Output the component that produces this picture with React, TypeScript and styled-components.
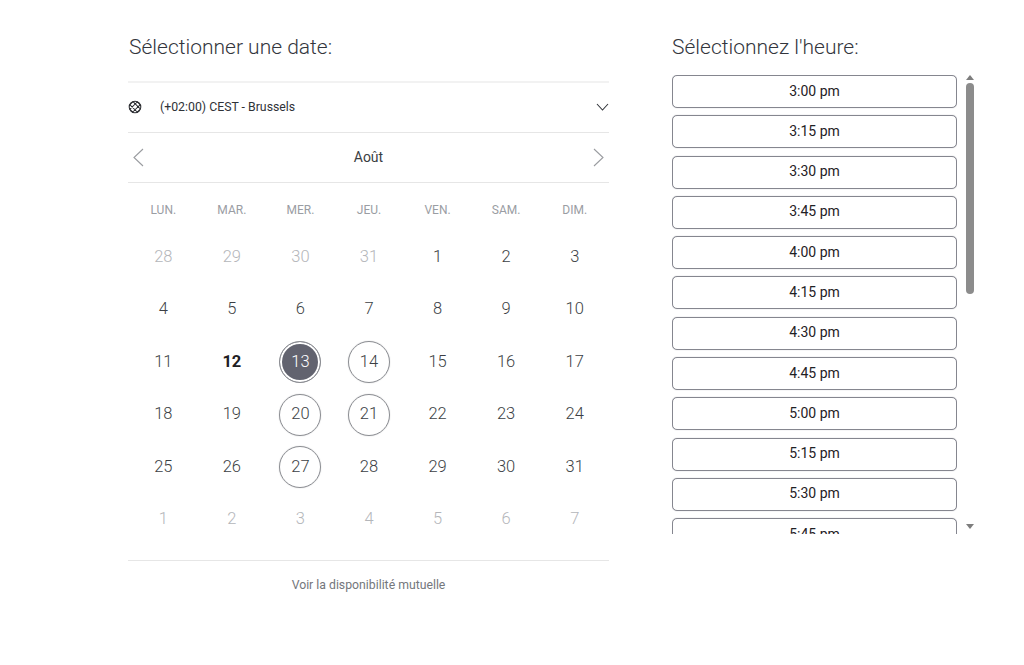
import React from 'react';
import styled, { createGlobalStyle } from 'styled-components';

const GlobalStyle = createGlobalStyle`
  html, body {
    margin: 0;
    padding: 0;
    background: #fff;
    font-family: Roboto, "Liberation Sans", sans-serif;
  }
`;

const Page = styled.div`
  width: 1024px;
  height: 665px;
  display: flex;
  align-items: flex-start;
  padding-left: 128px;
  gap: 63px;
  box-sizing: border-box;
  overflow: hidden;
`;

const DateColumn = styled.section`
  width: 481px;
  display: flex;
  flex-direction: column;
`;

const TimeColumn = styled.section`
  width: 304px;
  display: flex;
  flex-direction: column;
`;

const Title = styled.h2`
  margin: 0;
  height: 81px;
  padding: 35px 0 0 1px;
  box-sizing: border-box;
  font-size: 21px;
  line-height: 25px;
  font-weight: 300;
  color: #33363d;
`;

const TimeTitle = styled(Title)`
  height: 75px;
  padding-left: 0;
`;

const ZoneRow = styled.div`
  height: 47px;
  padding-bottom: 2px;
  display: flex;
  align-items: center;
  border-top: 2px solid #f2f2f2;
  border-bottom: 1px solid #e6e6e6;
  font-size: 12.3px;
  color: #2f3237;
`;

const ZoneLabel = styled.span`
  margin-left: 18px;
  flex: 1;
`;

const GlobeIcon = styled.svg`
  width: 14px;
  height: 14px;
  display: block;
`;

const MonthRow = styled.div`
  height: 49px;
  display: flex;
  align-items: center;
  justify-content: space-between;
  padding: 0 4px;
  border-bottom: 1px solid #e6e6e6;
  font-size: 14px;
  color: #3a3d42;
`;

const MonthLabel = styled.span`
  margin-bottom: 2px;
`;

const WeekHead = styled.div`
  display: grid;
  grid-template-columns: repeat(7, 1fr);
  height: 41px;
  padding: 6px 0 0 1px;
  align-items: center;
  font-size: 12px;
  color: #9a9da3;
  text-align: center;
`;

const DayGrid = styled.div`
  display: grid;
  grid-template-columns: repeat(7, 1fr);
  grid-auto-rows: 52.5px;
  padding-left: 1px;
  height: 330px;
  border-bottom: 1px solid #e6e6e6;
`;

const Day = styled.div<{ $muted?: boolean; $today?: boolean }>`
  display: flex;
  align-items: center;
  justify-content: center;
  font-size: 16.5px;
  font-weight: ${(p) => (p.$today ? 700 : 300)};
  color: ${(p) => (p.$muted ? '#b4b6ba' : p.$today ? '#1e2024' : '#3c3f45')};
`;

const Available = styled.span`
  width: 42px;
  height: 42px;
  margin-top: 2px;
  padding-bottom: 2px;
  box-sizing: border-box;
  border: 1px solid #8b8d92;
  border-radius: 50%;
  box-shadow: 0 0 1px rgba(139, 141, 146, 0.7);
  display: flex;
  align-items: center;
  justify-content: center;
`;

const Selected = styled(Available)`
  background: #62636f;
  color: #fff;
  box-shadow: inset 0 0 0 2px #fff;
`;

const Footer = styled.div`
  margin-top: 17px;
  text-align: center;
  font-size: 12.25px;
  line-height: 14px;
  color: #74777c;
`;

const SlotArea = styled.div`
  display: flex;
  height: 459px;
  gap: 7px;
`;

const SlotList = styled.div`
  width: 285px;
  overflow: hidden;
  display: flex;
  flex-direction: column;
  gap: 7.3px;
`;

const Slot = styled.button`
  flex: none;
  width: 285px;
  height: 33px;
  padding: 0 0 2px;
  box-sizing: border-box;
  background: #fff;
  border: 1px solid #85868f;
  border-radius: 5px;
  box-shadow: 0 0 1px rgba(133, 134, 143, 0.7);
  font-family: inherit;
  font-size: 14px;
  color: #1f2125;
`;

const ScrollTrack = styled.div`
  width: 12px;
  height: 459px;
  display: flex;
  flex-direction: column;
  align-items: center;
  background-color: #fff;
  background-image: radial-gradient(#ececec 0.6px, transparent 0.7px);
  background-size: 2px 2px;
`;

const ScrollArrow = styled.svg`
  flex: none;
  width: 8px;
  height: 5px;
  display: block;
`;

const ScrollThumb = styled.div`
  flex: none;
  width: 8px;
  height: 211px;
  margin-top: 3px;
  margin-bottom: 230px;
  border-radius: 4px;
  background: #8c8c8c;
`;

const Chevron = ({ points, w, h, color }: { points: string; w: number; h: number; color: string }) => (
  <svg width={w} height={h} viewBox={`0 0 ${w} ${h}`} fill="none" stroke={color} strokeWidth="1.1">
    <polyline points={points} />
  </svg>
);

const weekDays = ['LUN.', 'MAR.', 'MER.', 'JEU.', 'VEN.', 'SAM.', 'DIM.'];

const days = [
  28, 29, 30, 31, 1, 2, 3, 4, 5, 6, 7, 8, 9, 10, 11, 12, 13, 14, 15, 16, 17, 18, 19, 20, 21, 22, 23, 24, 25, 26, 27, 28,
  29, 30, 31, 1, 2, 3, 4, 5, 6, 7,
];

const availableDays = [14, 20, 21, 27];

const times = [
  '3:00 pm', '3:15 pm', '3:30 pm', '3:45 pm', '4:00 pm', '4:15 pm',
  '4:30 pm', '4:45 pm', '5:00 pm', '5:15 pm', '5:30 pm', '5:45 pm',
];

const App: React.FC = () => {
  return (
    <Page>
      <GlobalStyle />

      <DateColumn>
        <Title>Sélectionner une date:</Title>

        <ZoneRow>
          <GlobeIcon viewBox="0 0 14 14" fill="none" stroke="#2b2d31" strokeWidth="1.05">
            <circle cx="7" cy="7" r="5.8" />
            <path d="M1.6 5L5 1.6M2 9.2L9.2 2M4.8 12L12 4.8M9 12.4L12.4 9M5 1.6L12.4 9M2 4.8L9.2 12M1.6 9L5 12.4M9 1.6L12.4 5" />
          </GlobeIcon>
          <ZoneLabel>(+02:00) CEST - Brussels</ZoneLabel>
          <Chevron w={13} h={8} color="#33363b" points="1,1 6.5,7 12,1" />
        </ZoneRow>

        <MonthRow>
          <Chevron w={12} h={19} color="#9a9ca0" points="11,1 2,9.5 11,18" />
          <MonthLabel>Août</MonthLabel>
          <Chevron w={12} h={19} color="#9a9ca0" points="1,1 10,9.5 1,18" />
        </MonthRow>

        <WeekHead>
          {weekDays.map((d) => (
            <span key={d}>{d}</span>
          ))}
        </WeekHead>

        <DayGrid>
          {days.map((d, i) => {
            const inMonth = i >= 4 && i < 35;
            return (
              <Day key={i} $muted={!inMonth} $today={inMonth && d === 12}>
                {inMonth && d === 13 ? (
                  <Selected>{d}</Selected>
                ) : inMonth && availableDays.includes(d) ? (
                  <Available>{d}</Available>
                ) : (
                  d
                )}
              </Day>
            );
          })}
        </DayGrid>

        <Footer>Voir la disponibilité mutuelle</Footer>
      </DateColumn>

      <TimeColumn>
        <TimeTitle>Sélectionnez l'heure:</TimeTitle>

        <SlotArea>
          <SlotList>
            {times.map((t) => (
              <Slot key={t}>{t}</Slot>
            ))}
          </SlotList>

          <ScrollTrack>
            <ScrollArrow viewBox="0 0 8 5">
              <polygon points="4,0 8,5 0,5" fill="#7d7d7d" />
            </ScrollArrow>
            <ScrollThumb />
            <ScrollArrow viewBox="0 0 8 5">
              <polygon points="0,0 8,0 4,5" fill="#7d7d7d" />
            </ScrollArrow>
          </ScrollTrack>
        </SlotArea>
      </TimeColumn>
    </Page>
  );
};

export default App;
